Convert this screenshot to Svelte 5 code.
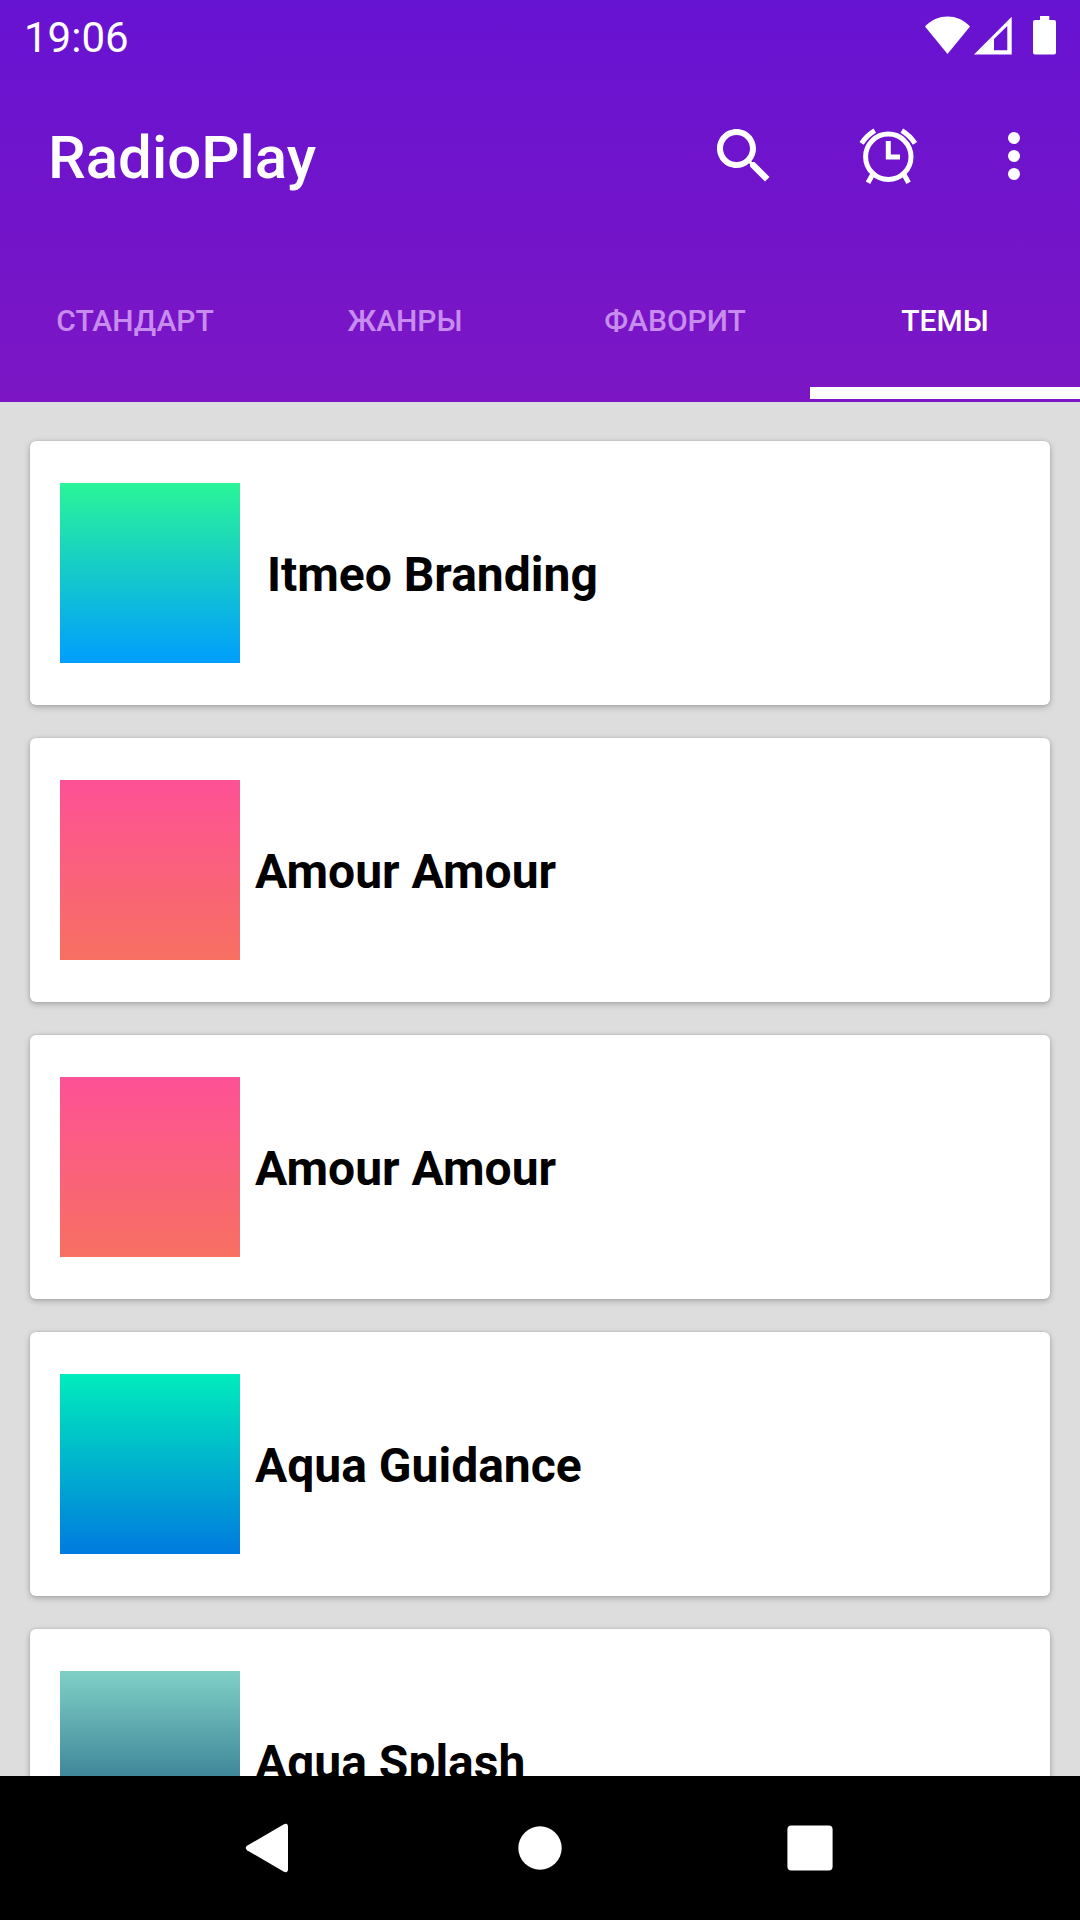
<script lang="ts">
	const tabs = ['Стандарт', 'Жанры', 'Фаворит', 'Темы'];

	const themes = [
		{ name: ' Itmeo Branding', from: '#2af598', to: '#009efd' },
		{ name: 'Amour Amour', from: '#fe5196', to: '#f77062' },
		{ name: 'Amour Amour', from: '#fe5196', to: '#f77062' },
		{ name: 'Aqua Guidance', from: '#00ecbc', to: '#007adf' },
		{ name: 'Aqua Splash', from: '#80d0c7', to: '#13547a' }
	];

	let activeTab = $state(3);
</script>

<div class="screen">
	<header class="header">
		<div class="status">
			<span class="status__time">19:06</span>
			<div class="status__icons">
				<svg viewBox="0 0 48 48" aria-hidden="true">
					<path d="M1 14.600C7 7.600 15 4.400 23.500 4.400S40 7.600 46 14.600L23.500 42z" />
				</svg>
				<svg viewBox="0 0 48 48" aria-hidden="true">
					<path fill-rule="evenodd" d="M2 42.500L39.700 4.800V42.500zM22 38.300H35.300V14L22 27z" />
				</svg>
				<svg viewBox="0 0 48 48" aria-hidden="true">
					<path
						d="M20 4h9.300v4h4.700a2 2 0 0 1 2 2v30.500a2 2 0 0 1-2 2H15a2 2 0 0 1-2-2V10a2 2 0 0 1 2-2h5z"
					/>
				</svg>
			</div>
		</div>

		<div class="toolbar">
			<h1 class="toolbar__title">RadioPlay</h1>
			<button class="toolbar__button" aria-label="Поиск">
				<svg viewBox="0 0 24 24" aria-hidden="true">
					<path
						d="M15.500 14h-.79l-.28-.27C15.410 12.590 16 11.110 16 9.500 16 5.910 13.090 3 9.500 3S3 5.910 3 9.500 5.910 16 9.500 16c1.610 0 3.090-.59 4.230-1.570l.27.28v.79l5 4.990L20.490 19l-4.990-5zm-6 0C7.010 14 5 11.990 5 9.500S7.010 5 9.500 5 14 7.010 14 9.500 11.990 14 9.500 14z"
					/>
				</svg>
			</button>
			<button class="toolbar__button" aria-label="Будильник">
				<svg class="outline" viewBox="0 0 72 72" aria-hidden="true">
					<circle cx="36.300" cy="36.800" r="22.700" />
					<path d="M36.300 21V36.900H48" />
					<path d="M9.600 23.400Q14.500 15.500 22.800 10.600M63 23.400Q58 15.500 49.800 10.600" />
					<path d="M20.600 54.500L16 62.800M52 54.500L56.600 62.800" />
				</svg>
			</button>
			<button class="toolbar__button toolbar__button--more" aria-label="Ещё">
				<svg viewBox="0 0 24 24" aria-hidden="true">
					<circle cx="12" cy="6" r="2" />
					<circle cx="12" cy="12" r="2" />
					<circle cx="12" cy="18" r="2" />
				</svg>
			</button>
		</div>

		<nav class="tabs">
			{#each tabs as tab, i}
				<button
					class="tabs__item"
					class:tabs__item--active={i === activeTab}
					onclick={() => (activeTab = i)}
				>
					{tab}
				</button>
			{/each}
		</nav>
	</header>

	<main class="list">
		{#each themes as theme}
			<button class="card">
				<span
					class="card__swatch"
					style="background: linear-gradient({theme.from}, {theme.to})"
				></span>
				<span class="card__name">{theme.name}</span>
			</button>
		{/each}
	</main>

	<footer class="navbar">
		<button class="navbar__button" aria-label="Назад">
			<svg viewBox="0 0 72 72" aria-hidden="true">
				<path
					d="M13 33.800L49.500 12.400Q54 10.500 54 15V57Q54 61.500 49.500 59.600L13 38.200Q10.500 36 13 33.800z"
				/>
			</svg>
		</button>
		<button class="navbar__button" aria-label="Домой">
			<svg viewBox="0 0 72 72" aria-hidden="true">
				<circle cx="36" cy="36" r="21.700" />
			</svg>
		</button>
		<button class="navbar__button" aria-label="Обзор">
			<svg viewBox="0 0 72 72" aria-hidden="true">
				<rect x="13.400" y="13.400" width="45.200" height="45.200" rx="4" />
			</svg>
		</button>
	</footer>
</div>

<style>
	:global(body) {
		margin: 0;
	}

	.screen {
		display: flex;
		flex-direction: column;
		height: 100vh;
		background: #ddd;
		font-family: Roboto, sans-serif;
	}

	button {
		padding: 0;
		border: none;
		background: none;
		color: inherit;
		font: inherit;
		cursor: pointer;
	}

	svg {
		display: block;
		fill: currentColor;
	}

	.header {
		flex-shrink: 0;
		background: linear-gradient(#6713d2, #7c16c4);
		color: #fff;
	}

	.status {
		display: flex;
		align-items: center;
		justify-content: space-between;
		height: 72px;
		padding: 0 12px 0 24px;
	}

	.status__time {
		padding-top: 2px;
		font-size: 42px;
	}

	.status__icons {
		display: flex;
	}

	.status__icons svg {
		width: 48px;
		height: 48px;
	}

	.toolbar {
		display: flex;
		align-items: center;
		height: 168px;
		padding: 0 12px 0 48px;
	}

	.toolbar__title {
		flex: 1;
		margin: 0;
		padding-top: 2px;
		font-size: 60px;
		font-weight: 500;
	}

	.toolbar__button {
		display: flex;
		justify-content: center;
		width: 144px;
	}

	.toolbar__button--more {
		width: 108px;
	}

	.toolbar__button svg {
		width: 72px;
		height: 72px;
	}

	.outline {
		fill: none;
		stroke: currentColor;
		stroke-width: 5;
	}

	.tabs {
		display: flex;
		padding-bottom: 3px;
	}

	.tabs__item {
		flex: 1;
		height: 159px;
		padding-top: 14px;
		border-bottom: 12px solid transparent;
		color: #c88cee;
		font-size: 30px;
		font-weight: 500;
		text-transform: uppercase;
	}

	.tabs__item--active {
		border-color: #fff;
		color: #fff;
	}

	.list {
		display: flex;
		flex: 1;
		flex-direction: column;
		gap: 33px;
		min-height: 0;
		padding: 39px 30px;
		overflow-y: auto;
		scrollbar-width: none;
	}

	.card {
		display: flex;
		flex-shrink: 0;
		align-items: center;
		gap: 15px;
		padding: 42px 30px;
		border-radius: 6px;
		background: #fff;
		box-shadow:
			0 2px 6px rgba(0, 0, 0, 0.25),
			0 0 2px rgba(0, 0, 0, 0.15);
		text-align: left;
	}

	.card__swatch {
		width: 180px;
		height: 180px;
	}

	.card__name {
		padding-top: 2px;
		color: #000;
		font-size: 48px;
		font-weight: 700;
		white-space: pre;
	}

	.navbar {
		display: flex;
		flex-shrink: 0;
		align-items: center;
		height: 144px;
		padding: 0 12.5%;
		background: #000;
		color: #fff;
	}

	.navbar__button {
		display: flex;
		flex: 1;
		justify-content: center;
	}

	.navbar__button svg {
		width: 72px;
		height: 72px;
	}
</style>
